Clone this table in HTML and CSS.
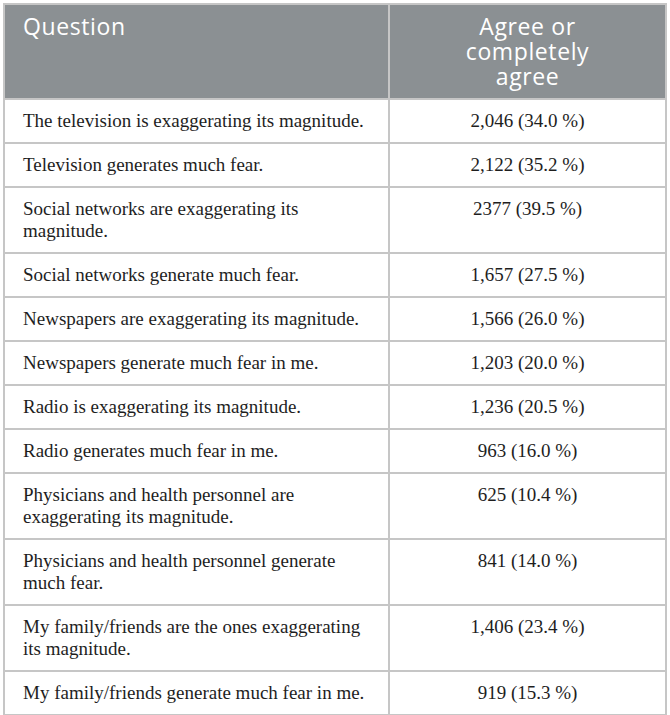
FILE: index.html
```html
<!DOCTYPE html>
<html lang="en">
<head>
<meta charset="utf-8">
<title>Table</title>
<link rel="stylesheet" href="styles.css">
</head>
<body>
<div class="wrap">
<table class="data">
  <colgroup><col class="c1"><col class="c2"></colgroup>
  <thead>
    <tr><th class="q">Question</th><th class="a">Agree or completely agree</th></tr>
  </thead>
  <tbody>
    <tr><td>The television is exaggerating its magnitude.</td><td class="n">2,046 (34.0 %)</td></tr>
    <tr><td>Television generates much fear.</td><td class="n">2,122 (35.2 %)</td></tr>
    <tr><td>Social networks are exaggerating its magnitude.</td><td class="n">2377 (39.5 %)</td></tr>
    <tr><td>Social networks generate much fear.</td><td class="n">1,657 (27.5 %)</td></tr>
    <tr><td>Newspapers are exaggerating its magnitude.</td><td class="n">1,566 (26.0 %)</td></tr>
    <tr><td>Newspapers generate much fear in me.</td><td class="n">1,203 (20.0 %)</td></tr>
    <tr><td>Radio is exaggerating its magnitude.</td><td class="n">1,236 (20.5 %)</td></tr>
    <tr><td>Radio generates much fear in me.</td><td class="n">963 (16.0 %)</td></tr>
    <tr><td>Physicians and health personnel are exaggerating its magnitude.</td><td class="n">625 (10.4 %)</td></tr>
    <tr><td>Physicians and health personnel generate much fear.</td><td class="n">841 (14.0 %)</td></tr>
    <tr><td>My family/friends are the ones exaggerating its magnitude.</td><td class="n">1,406 (23.4 %)</td></tr>
    <tr><td>My family/friends generate much fear in me.</td><td class="n">919 (15.3 %)</td></tr>
  </tbody>
</table>
</div>
</body>
</html>
```
FILE: styles.css
```css
html, body {
  margin: 0;
  padding: 0;
  background: #ffffff;
}
.wrap {
  padding: 3px 5px 2px 3px;
}
.data {
  width: 662px;
  border-collapse: collapse;
  table-layout: fixed;
  border: 2px solid #c6c6c6;
}
.c1 { width: 385px; }
.c2 { width: 277px; }
.data th {
  background: #8b9093;
  color: #ffffff;
  font-family: "Open Sans", "Noto Sans", sans-serif;
  font-weight: 400;
  font-size: 23px;
  letter-spacing: 0.6px;
  line-height: 25px;
  padding: 9px 18px 9px;
  vertical-align: top;
  border: 2px solid #c6c6c6;
}
.data th.q { text-align: left; }
.data th.a { text-align: center; padding: 9px 50px 9px; }
.data td {
  font-family: "Liberation Serif", "Times New Roman", serif;
  font-size: 19px;
  line-height: 22px;
  color: #1e1e1e;
  padding: 10px 12px 10px 18px;
  vertical-align: top;
  border: 2px solid #c6c6c6;
}
.data td.n { text-align: center; padding: 10px 12px; }
```
